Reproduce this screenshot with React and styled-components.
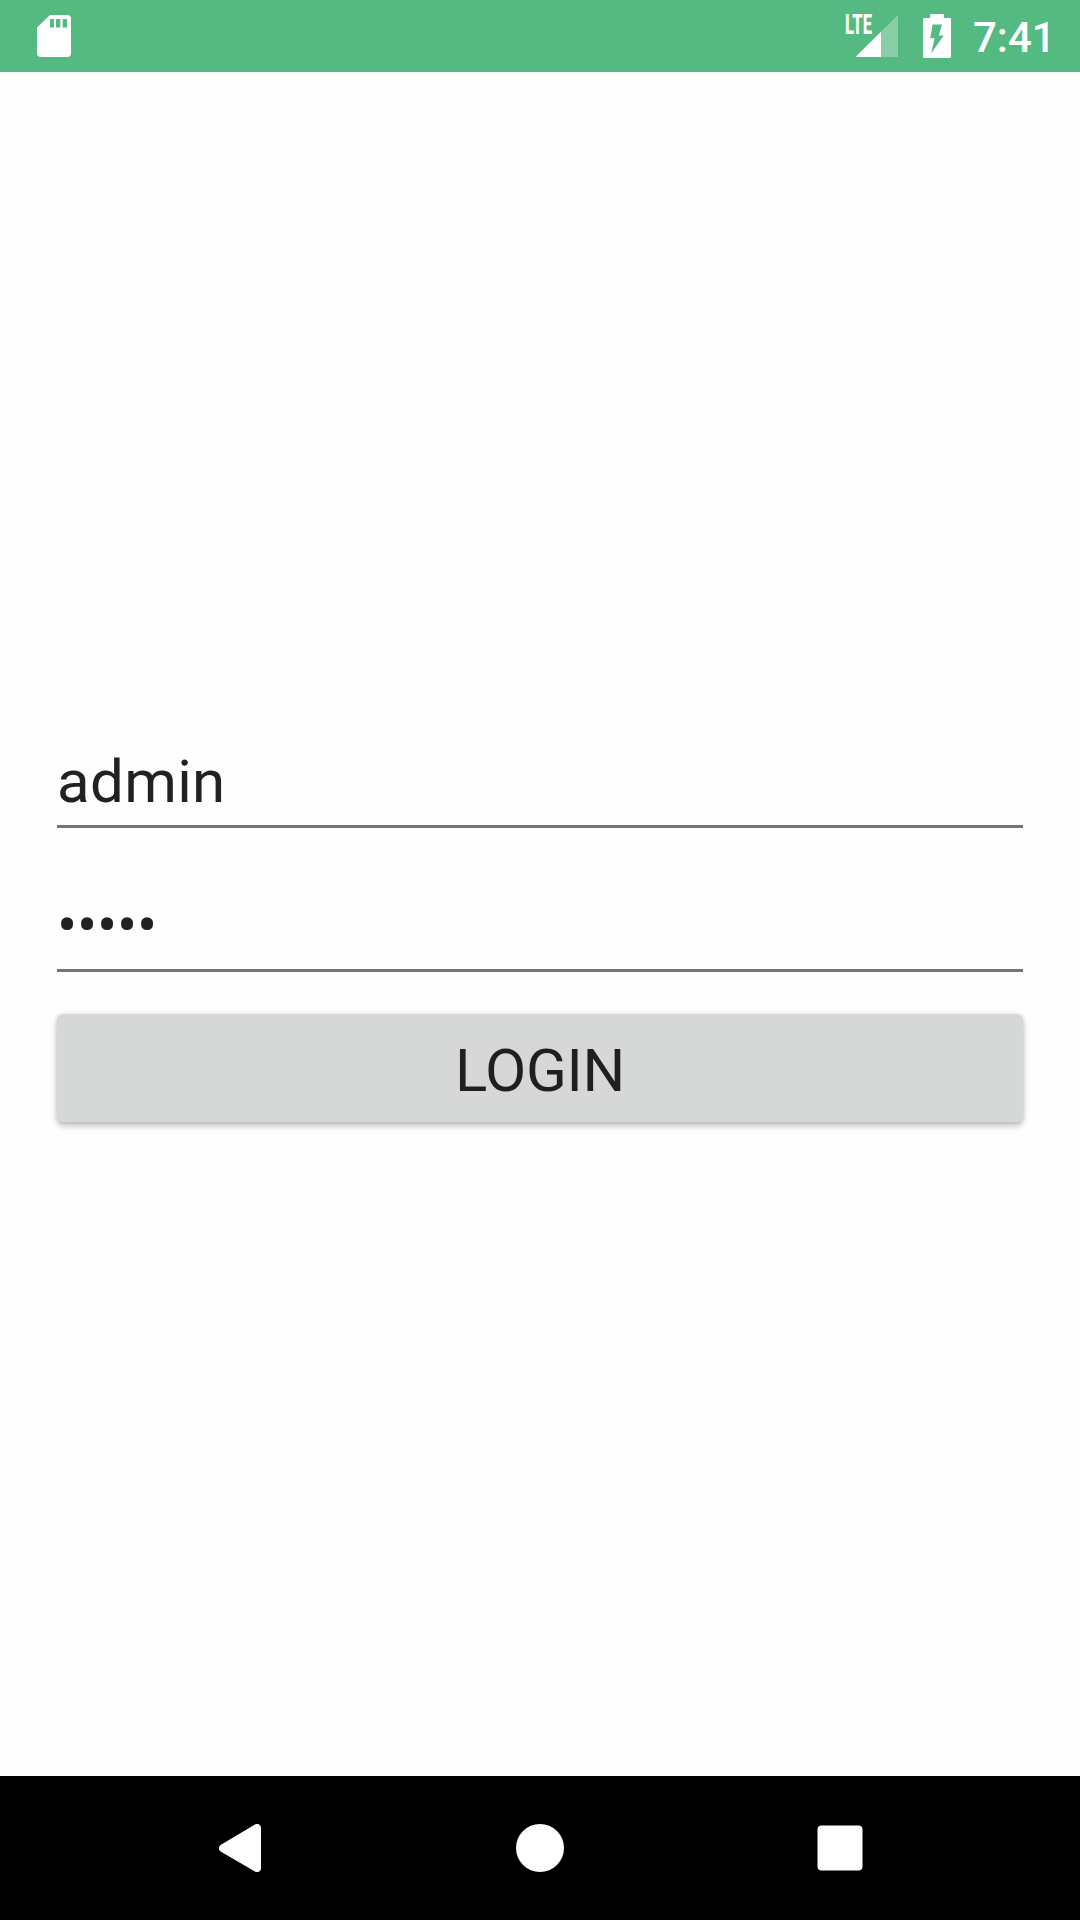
import React from 'react';
import styled, { createGlobalStyle } from 'styled-components';

const GlobalStyle = createGlobalStyle`
  * { box-sizing: border-box; }
  body { margin: 0; background: #fefefe; font-family: Roboto, "Liberation Sans", sans-serif; }
`;

const Screen = styled.div`
  display: flex;
  flex-direction: column;
  width: 1080px;
  height: 1920px;
  overflow: hidden;
`;

const StatusBar = styled.header`
  display: flex;
  align-items: center;
  justify-content: space-between;
  height: 72px;
  padding: 0 29px 0 37px;
  background: #55ba82;
  color: #fff;
`;

const StatusGroup = styled.div`
  display: flex;
  align-items: center;
`;

const StatusIcon = styled.svg`
  display: block;
  overflow: visible;
  margin-right: ${({ $gap = 0 }) => $gap}px;
`;

const Clock = styled.time`
  width: 78px;
  font-size: 42px;
  font-weight: 500;
  line-height: 50px;
  padding-top: 4px;
  white-space: nowrap;
`;

const Form = styled.main`
  flex: 1;
  display: flex;
  flex-direction: column;
  padding: 675px 57px 0;
`;

const Field = styled.div`
  height: 81px;
  margin-bottom: ${({ $gap }) => $gap}px;
  border-bottom: 3px solid #757575;
  color: #212121;
  font-size: 60px;
  line-height: 70px;
  letter-spacing: ${({ $tracking = 0 }) => $tracking}px;
`;

const LoginButton = styled.button`
  height: 108px;
  padding: 6px 0 0;
  border: 0;
  border-radius: 6px;
  background: #d6d8d7;
  box-shadow: 0 4px 6px rgba(0, 0, 0, 0.23), 0 0 5px rgba(0, 0, 0, 0.1);
  color: #1e1f1e;
  font-family: inherit;
  font-size: 60px;
  line-height: 70px;
  letter-spacing: -0.3px;
`;

const NavBar = styled.nav`
  display: flex;
  align-items: center;
  justify-content: center;
  height: 144px;
  background: #000;
`;

const NavItem = styled.div`
  display: flex;
  justify-content: center;
  width: 300px;
`;

const SdCard = () => (
  <StatusIcon width="34" height="42" viewBox="0 0 34 42">
    <path
      fill="#fff"
      fillRule="evenodd"
      d="M13 0H30Q34 0 34 4V38Q34 42 30 42H4Q0 42 0 38V12.5ZM13 4V12.5H17V4ZM19 4V12.5H23.3V4ZM25.7 4V12.5H30V4Z"
    />
  </StatusIcon>
);

const Signal = () => (
  <StatusIcon $gap={25} width="53" height="42" viewBox="0 0 53 42">
    <path d="M53 0V42H10.5Z" fill="#fff" fillOpacity="0.3" />
    <path d="M36 16.8V42H10.5Z" fill="#fff" />
    <text
      x="0"
      y="19"
      fill="#fff"
      fontFamily="Roboto, sans-serif"
      fontSize="27"
      fontWeight="800"
      textLength="27"
      lengthAdjust="spacingAndGlyphs"
    >
      LTE
    </text>
  </StatusIcon>
);

const Battery = () => (
  <StatusIcon $gap={22} width="28" height="44" viewBox="0 0 28 44">
    <path
      fill="#fff"
      fillRule="evenodd"
      d="M7.2 0H20.8V4H27Q28 4 28 5V43Q28 44 27 44H1Q0 44 0 43V5Q0 4 1 4H7.2ZM9.5 10.5L7.3 24.3H11.7L8 39.5L20.8 21.6H15.8L19 10.5Z"
    />
  </StatusIcon>
);

export default function App() {
  return (
    <Screen>
      <GlobalStyle />
      <StatusBar>
        <SdCard />
        <StatusGroup>
          <Signal />
          <Battery />
          <Clock>7:41</Clock>
        </StatusGroup>
      </StatusBar>
      <Form>
        <Field $gap={63} $tracking={0.35}>admin</Field>
        <Field $gap={42} $tracking={-0.25}>•••••</Field>
        <LoginButton type="button">LOGIN</LoginButton>
      </Form>
      <NavBar>
        <NavItem>
          <svg width="42" height="48" viewBox="0 0 42 48">
            <path d="M4 24.2L38 4V44Z" fill="#fff" stroke="#fff" strokeWidth="8" strokeLinejoin="round" />
          </svg>
        </NavItem>
        <NavItem>
          <svg width="48" height="48" viewBox="0 0 48 48">
            <circle cx="24" cy="24" r="24" fill="#fff" />
          </svg>
        </NavItem>
        <NavItem>
          <svg width="46" height="46" viewBox="0 0 46 46">
            <rect x="0.5" y="0.5" width="45" height="45" rx="4" fill="#fff" />
          </svg>
        </NavItem>
      </NavBar>
    </Screen>
  );
}
